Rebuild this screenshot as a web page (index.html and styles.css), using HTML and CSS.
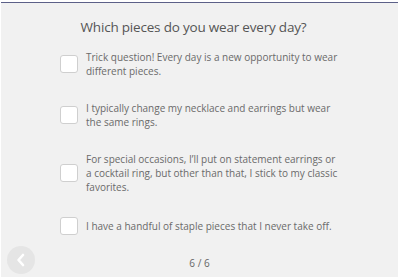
FILE: index.html
```html
<!DOCTYPE html>
<html>
<head>
<meta charset="utf-8">
<link rel="stylesheet" href="styles.css">
</head>
<body>
<div class="panel">
  <h1 class="title">Which pieces do you wear every day?</h1>
  <ul class="options">
    <li class="option"><span class="box"></span><span class="label">Trick question! Every day is a new opportunity to wear different pieces.</span></li>
    <li class="option"><span class="box"></span><span class="label">I typically change my necklace and earrings but wear the same rings.</span></li>
    <li class="option"><span class="box"></span><span class="label">For special occasions, I’ll put on statement earrings or a cocktail ring, but other than that, I stick to my classic favorites.</span></li>
    <li class="option"><span class="box"></span><span class="label">I have a handful of staple pieces that I never take off.</span></li>
  </ul>
  <div class="footer">
    <button class="back" aria-label="Back">
      <svg width="12" height="14" viewBox="0 0 12 14"><path d="M8 2 L3.5 7 L8 12" fill="none" stroke="#fff" stroke-width="2.6" stroke-linecap="round" stroke-linejoin="round"/></svg>
    </button>
    <span class="progress">6 / 6</span>
  </div>
</div>
</body>
</html>
```
FILE: styles.css
```css
html, body {
  margin: 0;
  padding: 0;
  background: #ffffff;
  height: 100%;
}
body {
  font-family: "Open Sans", "Liberation Sans", sans-serif;
  overflow: hidden;
}
.panel {
  margin: 2px 2px 0 1px;
  border-top: 1px solid #5c6088;
  background: #f1f1f1;
  height: 275px;
  box-sizing: border-box;
  padding-top: 13px;
}
.title {
  margin: 0;
  padding-right: 12px;
  font-size: 13.5px;
  letter-spacing: -0.2px;
  font-weight: 400;
  line-height: 22px;
  color: #555555;
  text-align: center;
}
.options {
  list-style: none;
  margin: 12px 0 0 0;
  padding: 0 0 0 59px;
  display: flex;
  flex-direction: column;
  gap: 23px;
}
.option {
  display: flex;
  align-items: center;
  gap: 8px;
}
.box {
  flex: none;
  width: 16px;
  height: 16px;
  background: #ffffff;
  border: 1px solid #cfcfcf;
  border-radius: 3px;
}
.label {
  width: 256px;
  font-size: 10px;
  line-height: 14px;
  color: #6a6a6a;
}
.footer {
  position: relative;
  margin-top: 11px;
  height: 28px;
  display: flex;
  justify-content: center;
}
.back {
  position: absolute;
  left: 6px;
  top: 0;
  width: 28px;
  height: 28px;
  border-radius: 50%;
  border: none;
  background: #e5e5e5;
  padding: 0;
  display: flex;
  align-items: center;
  justify-content: center;
}
.progress {
  font-size: 10px;
  line-height: 14px;
  margin-top: 10px;
  color: #666666;
}
```
